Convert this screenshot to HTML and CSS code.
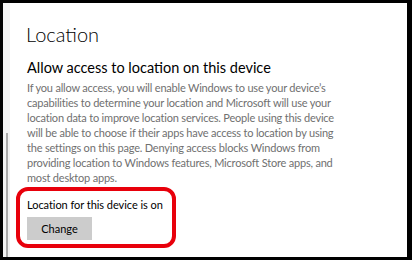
FILE: index.html
```html
<!DOCTYPE html>
<html>
<head>
<meta charset="utf-8">
<link rel="stylesheet" href="styles.css">
</head>
<body>
<div class="frame">
  <div class="strip"><div class="thumb"></div></div>
  <main class="page">
    <h1 class="title">Location</h1>
    <h2 class="subtitle">Allow access to location on this device</h2>
    <p class="desc">If you allow access, you will enable Windows to use your device’s capabilities to determine your location and Microsoft will use your location data to improve location services. People using this device will be able to choose if their apps have access to location by using the settings on this page. Denying access blocks Windows from providing location to Windows features, Microsoft Store apps, and most desktop apps.</p>
    <div class="highlight">
      <div class="status">Location for this device is on</div>
      <button class="btn">Change</button>
    </div>
  </main>
</div>
</body>
</html>
```
FILE: styles.css
```css
html, body {
  margin: 0;
  padding: 0;
  background: #000;
  height: 100%;
  overflow: hidden;
}
.frame {
  display: flex;
  height: 254px;
  margin: 3px 5px 3px 3px;
  background: #fff;
  font-family: Lato, "Noto Sans", sans-serif;
}
.strip {
  width: 7px;
  background: #f2f2f2;
  display: flex;
  flex-direction: column;
  padding-top: 130px;
  box-sizing: border-box;
  align-items: center;
}
.thumb {
  width: 2px;
  flex: 1;
  background: #a8a8a8;
}
.page {
  flex: 1;
  padding: 18px 0 0 16px;
}
.title {
  margin: 0;
  font-weight: 300;
  font-size: 20px;
  line-height: 26px;
  color: #000;
}
.subtitle {
  margin: 11px 0 0 1px;
  font-weight: 400;
  font-size: 14.5px;
  line-height: 20px;
  color: #000;
}
.desc {
  margin: 2px 0 0 1px;
  width: 308px;
  font-size: 11px;
  letter-spacing: -0.2px;
  line-height: 15px;
  color: #707070;
}
.highlight {
  margin: 2px 0 0 -10px;
  width: 160px;
  box-sizing: border-box;
  border: 4px solid #e8000b;
  border-radius: 12px;
  padding: 6px 0 4px 7px;
}
.status {
  font-size: 11px;
  letter-spacing: -0.05px;
  line-height: 16px;
  color: #000;
}
.btn {
  display: block;
  margin-top: 4px;
  width: 65px;
  height: 23px;
  border: none;
  background: #cccccc;
  font-family: inherit;
  font-size: 11px;
  line-height: 23px;
  color: #000;
  padding: 0;
}
```
